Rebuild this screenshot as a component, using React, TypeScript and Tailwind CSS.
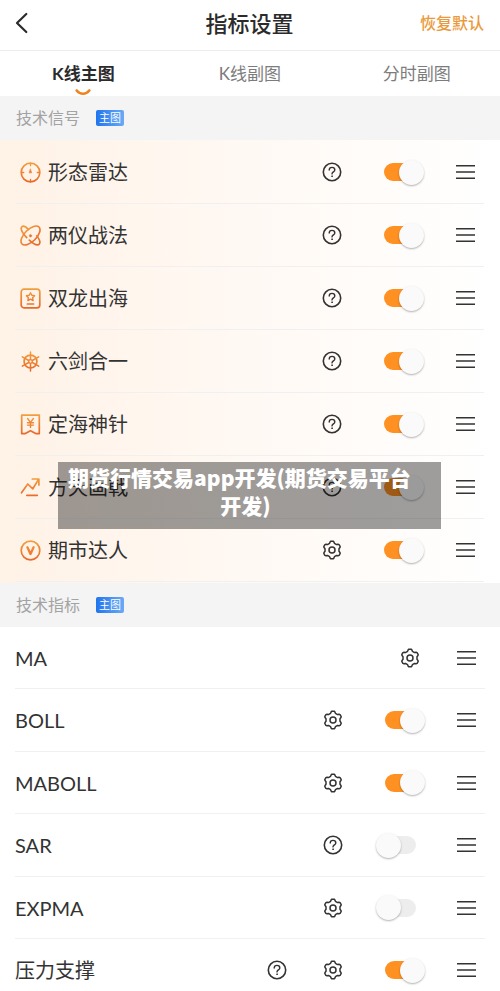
import React, { useState } from "react";

type Extra = "help" | "settings";

interface Indicator {
  name: string;
  icon?: React.ReactNode;
  actions: Extra[];
  enabled?: boolean;
}

function SignalIcon({ children }: { children: React.ReactNode }) {
  return (
    <svg
      className="size-[21px] shrink-0"
      viewBox="0 0 21 21"
      fill="none"
      stroke="url(#signal-gradient)"
      strokeWidth="1.7"
      strokeLinecap="round"
      strokeLinejoin="round"
      aria-hidden="true"
    >
      {children}
    </svg>
  );
}

const signals: Indicator[] = [
  {
    name: "形态雷达",
    actions: ["help"],
    enabled: true,
    icon: (
      <SignalIcon>
        <circle cx="10.5" cy="10.5" r="9.3" />
        <path d="M10.5 1.5v2.2M10.5 17.3v2.2M1.5 10.5h2.2M17.3 10.5h2.2" strokeWidth="1.3" />
        <path d="M10.5 7.2l1 3.6h-2z" fill="#e8792b" strokeWidth="0.8" />
      </SignalIcon>
    ),
  },
  {
    name: "两仪战法",
    actions: ["help"],
    enabled: true,
    icon: (
      <SignalIcon>
        <ellipse cx="10.5" cy="10.5" rx="12" ry="6" transform="rotate(-45 10.5 10.5)" />
        <path d="M8.4 4.3C5.6 1.5 3 .6 1.8 1.8c-1.7 1.7.5 6.6 4.9 10.9M9.3 15.1c3.9 3.5 8.2 5.7 9.9 4 1.4-1.400.3-4.700-2.500-8.300" />
        <circle cx="10.5" cy="10.8" r="1.2" fill="#e8702b" strokeWidth="0.6" />
      </SignalIcon>
    ),
  },
  {
    name: "双龙出海",
    actions: ["help"],
    enabled: true,
    icon: (
      <SignalIcon>
        <rect x="1.2" y="1.2" width="18.6" height="18.6" rx="2.8" />
        <path d="M10.5 4.8l1.3 2.5 2.8.4-2 2 .5 2.8-2.6-1.3-2.6 1.3.5-2.8-2-2 2.8-.4z" strokeWidth="1.4" />
        <path d="M7.3 16h6.4" strokeWidth="1.6" />
      </SignalIcon>
    ),
  },
  {
    name: "六剑合一",
    actions: ["help"],
    enabled: true,
    icon: (
      <SignalIcon>
        <circle cx="10.5" cy="10.5" r="6.4" strokeWidth="1.7" />
        <circle cx="10.5" cy="10.5" r="1.8" strokeWidth="1.3" />
        <path
          d="M10.5 1v7.400M10.5 12.600V20M2.300 5.800l6.400 3.700M12.300 11.500l6.400 3.700M18.700 5.800l-6.400 3.700M8.700 11.500l-6.400 3.700"
          strokeWidth="1.5"
        />
      </SignalIcon>
    ),
  },
  {
    name: "定海神针",
    actions: ["help"],
    enabled: true,
    icon: (
      <SignalIcon>
        <path d="M1.7 1.2h17.6v18.4h-3.6l-5.200-2.900-5.200 2.900H1.700z" />
        <path d="M7.6 4.500l2.900 3.900 2.900-3.900M10.500 8.400v5M7.500 8.700h6M7.500 11.100h6" strokeWidth="1.4" />
      </SignalIcon>
    ),
  },
  {
    name: "方天画戟",
    actions: ["help"],
    enabled: true,
    icon: (
      <SignalIcon>
        <path d="M1.5 15.8L7.8 7l5 4.800L18.500 2.500M12.300 2h6.600v6M6.800 18.300h10.500" />
      </SignalIcon>
    ),
  },
  {
    name: "期市达人",
    actions: ["settings"],
    enabled: true,
    icon: (
      <SignalIcon>
        <circle cx="10.5" cy="10.5" r="9.3" />
        <path d="M7.400 7.200l3.100 6.800 3.100-6.800" strokeWidth="2.3" />
      </SignalIcon>
    ),
  },
];

const indicators: Indicator[] = [
  { name: "MA", actions: ["settings"] },
  { name: "BOLL", actions: ["settings"], enabled: true },
  { name: "MABOLL", actions: ["settings"], enabled: true },
  { name: "SAR", actions: ["help"], enabled: false },
  { name: "EXPMA", actions: ["settings"], enabled: false },
  { name: "压力支撑", actions: ["help", "settings"], enabled: true },
];

function HelpIcon() {
  return (
    <svg className="size-5" viewBox="0 0 20 20" fill="none" stroke="currentColor" strokeLinecap="round" aria-hidden="true">
      <circle cx="10" cy="10" r="8.7" strokeWidth="1.6" />
      <path d="M7.2 8.1c0-1.700 1.200-2.700 2.800-2.700s2.800 1 2.800 2.500c0 1.900-2.800 2.100-2.800 4" strokeWidth="1.4" />
      <circle cx="10" cy="14.2" r=".5" fill="currentColor" strokeWidth=".7" />
    </svg>
  );
}

// Six teeth, each one a narrow tip with a shoulder on either side.
const gearOutline = [0, 60, 120, 180, 240, 300]
  .flatMap((tooth) =>
    [
      [-20, 7.1],
      [-13, 8.3],
      [-7, 8.9],
      [7, 8.9],
      [13, 8.3],
      [20, 7.1],
    ].map(([offset, radius]) => {
      const angle = ((tooth + offset - 90) * Math.PI) / 180;
      return (10 + radius * Math.cos(angle)).toFixed(2) + "," + (10 + radius * Math.sin(angle)).toFixed(2);
    }),
  )
  .join(" ");

function GearIcon() {
  return (
    <svg className="size-5" viewBox="0 0 20 20" fill="none" stroke="currentColor" strokeWidth="1.5" strokeLinejoin="round" aria-hidden="true">
      <polygon points={gearOutline} />
      <circle cx="10" cy="10" r="3" />
    </svg>
  );
}

function ActionButton({ kind, name }: { kind: Extra; name: string }) {
  return (
    <button type="button" aria-label={name + (kind === "help" ? "说明" : "设置")} className="flex w-14 justify-center">
      {kind === "help" ? <HelpIcon /> : <GearIcon />}
    </button>
  );
}

function Toggle({ name, initial }: { name: string; initial: boolean }) {
  const [on, setOn] = useState(initial);
  return (
    <input
      type="checkbox"
      role="switch"
      aria-label={name}
      checked={on}
      onChange={() => setOn(!on)}
      className="flex h-[18px] w-[31px] appearance-none items-center rounded-full bg-[#ededed] before:-ml-[9px] before:block before:size-[25px] before:shrink-0 before:rounded-full before:bg-[#fafafa] before:shadow-[0_1px_2px_rgba(0,0,0,0.3)] checked:bg-[#ff9022] checked:before:ml-[15px]"
    />
  );
}

function Row({ item }: { item: Indicator }) {
  const switchable = item.enabled !== undefined;
  return (
    <li className="mx-[15px] flex h-[63px] items-center border-b border-[#f0f0f0] text-[#333333]">
      {item.icon && <span className="mr-[7px] pl-[5px]">{item.icon}</span>}
      <span className="flex-1 text-xl">{item.name}</span>
      {switchable && item.actions.map((kind) => <ActionButton key={kind} kind={kind} name={item.name} />)}
      <span className="flex w-[78px] justify-center">
        {switchable ? (
          <Toggle name={item.name} initial={item.enabled === true} />
        ) : (
          <span className="pl-5">
            <ActionButton kind="settings" name={item.name} />
          </span>
        )}
      </span>
      <button type="button" aria-label={"拖动排序 " + item.name} className="flex w-[46px] justify-end pr-[9px]">
        <svg className="h-4 w-[19px]" viewBox="0 0 19 16" stroke="currentColor" strokeWidth="1.5" aria-hidden="true">
          <path d="M0 1.800h19M0 8h19M0 14.200h19" />
        </svg>
      </button>
    </li>
  );
}

function SectionHeading({ title }: { title: string }) {
  return (
    <h2 className="flex h-11 items-center gap-4 bg-[#f4f4f4] px-4 text-base text-[#a3a3a3]">
      {title}
      <span className="flex h-4 w-7 items-center justify-center rounded-xs bg-linear-to-r from-[#1f74ee] to-[#69aaf5] text-[11px] text-white">
        主图
      </span>
    </h2>
  );
}

const tabs = ["K线主图", "K线副图", "分时副图"];

export default function App() {
  const [active, setActive] = useState(0);
  return (
    <div className="relative flex h-screen flex-col bg-white font-['Lato','Noto_Sans_CJK_SC',sans-serif]">
      <svg className="absolute size-0" aria-hidden="true">
        <defs>
          <linearGradient id="signal-gradient" x1="0" y1="0" x2="0" y2="21" gradientUnits="userSpaceOnUse">
            <stop offset="0" stopColor="#f2a040" />
            <stop offset="1" stopColor="#e8662a" />
          </linearGradient>
        </defs>
      </svg>

      <header className="grid h-[51px] shrink-0 grid-cols-3 items-center border-b border-[#ececec] pb-1 pl-[15px] pr-4">
        <button type="button" aria-label="返回" className="justify-self-start text-[#2b2b2b]">
          <svg
            className="h-[22px] w-[13px]"
            viewBox="0 0 13 22"
            fill="none"
            stroke="currentColor"
            strokeWidth="2.2"
            strokeLinecap="round"
            strokeLinejoin="round"
            aria-hidden="true"
          >
            <path d="M11.3 2L2 11l9.300 9" />
          </svg>
        </button>
        <h1 className="text-center text-[22px] font-medium text-[#2b2b2b]">指标设置</h1>
        <button type="button" className="justify-self-end text-base font-medium text-[#ea9a3c]">
          恢复默认
        </button>
      </header>

      <nav role="tablist" className="grid h-[45px] shrink-0 grid-cols-3">
        {tabs.map((tab, i) => (
          <button
            key={tab}
            type="button"
            role="tab"
            aria-selected={active === i}
            onClick={() => setActive(i)}
            className={
              active === i
                ? "flex flex-col items-center justify-end text-[17px] font-bold text-[#2b2b2b]"
                : "flex flex-col items-center justify-end text-[17px] text-[#7c7c7c]"
            }
          >
            <span className="leading-[30px]">{tab}</span>
            <svg className="h-[7px] w-4" viewBox="0 0 16 7" fill="none" aria-hidden="true">
              {active === i && <path d="M1.7 1.5c3.500 4.400 9.100 4.400 12.600 0" stroke="#ee8420" strokeWidth="2.6" strokeLinecap="round" />}
            </svg>
          </button>
        ))}
      </nav>

      <main className="min-h-0 flex-1 overflow-y-auto [scrollbar-width:none]">
        <SectionHeading title="技术信号" />
        <ul className="bg-linear-to-r from-[#fff2e6] via-[#fff9f4] to-[#ffffff] py-px pr-px">
          {signals.map((item) => (
            <Row key={item.name} item={item} />
          ))}
        </ul>
        <SectionHeading title="技术指标" />
        <ul className="[&>li:nth-child(odd)]:h-[62px]">
          {indicators.map((item) => (
            <Row key={item.name} item={item} />
          ))}
        </ul>
      </main>

      <p className="absolute left-[58px] right-[59px] top-[462px] bg-black/38 px-2 pb-[10px] pt-px text-center font-['Noto_Sans_CJK_SC',sans-serif] text-[21px] font-black leading-7 text-white">
        <span className="block pr-5">期货行情交易app开发(期货交易平台</span>
        <span className="block pr-2">开发)</span>
      </p>
    </div>
  );
}
